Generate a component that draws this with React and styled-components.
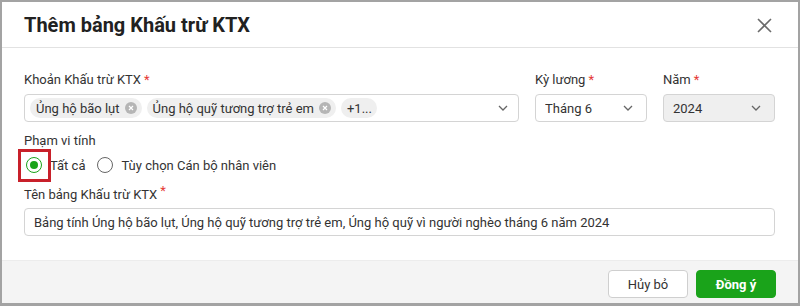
import React from "react";
import styled, { createGlobalStyle } from "styled-components";

const Global = createGlobalStyle`
  html, body { margin: 0; padding: 0; background: #a3a3a3; }
  body { font-family: Roboto, "Noto Sans", Arial, sans-serif; }
  * { box-sizing: border-box; }
`;

const Frame = styled.div`
  padding: 2px;
  width: 800px;
  height: 306px;
`;

const Dialog = styled.div`
  width: 796px;
  height: 301px;
  background: #fff;
  display: flex;
  flex-direction: column;
`;

const Header = styled.div`
  height: 46px;
  border-bottom: 1px solid #e2e2e2;
  display: flex;
  align-items: center;
  justify-content: space-between;
  padding: 0 26px 0 22px;
`;

const Title = styled.h1`
  margin: 0;
  font-size: 20px;
  font-weight: 700;
  color: #212121;
  letter-spacing: 0;
`;

const CloseBtn = styled.button`
  border: none;
  background: transparent;
  padding: 0;
  width: 16px;
  height: 16px;
  display: flex;
  align-items: center;
  justify-content: center;
  margin-top: 1px;
`;

const Body = styled.div`
  flex: 1;
  padding: 23px 23px 0 22px;
  display: flex;
  flex-direction: column;
`;

const TopRow = styled.div`
  display: grid;
  grid-template-columns: 1fr 112px 112px;
  column-gap: 16px;
`;

const Field = styled.div`
  display: flex;
  flex-direction: column;
  margin-top: ${(p) => p.$mt || 0}px;
`;

const Label = styled.div`
  font-size: 13px;
  line-height: 18px;
  color: #333;
  margin-bottom: ${(p) => p.$mb ?? 5}px;
`;

const Star = styled.span`
  color: #e53935;
  margin-left: 3px;
  position: relative;
  top: ${(p) => (p.$raised ? -4 : 0)}px;
`;

const Box = styled.div`
  height: 28px;
  border: 1px solid #d4d4d4;
  border-radius: 4px;
  background: ${(p) => (p.$disabled ? "#efefef" : "#fff")};
  display: flex;
  align-items: center;
  padding: 0 ${(p) => (p.$tags ? 10 : 13)}px 0 ${(p) => (p.$tags ? 5 : 9)}px;
  font-size: 13px;
  color: #333;
`;

const BoxContent = styled.div`
  flex: 1;
  display: flex;
  align-items: center;
  gap: 5px;
  overflow: hidden;
  white-space: nowrap;
`;

const Tag = styled.span`
  display: inline-flex;
  align-items: center;
  gap: 5px;
  height: 20px;
  padding: 0 5px 0 6px;
  background: #efefef;
  border-radius: 10px;
  font-size: 13px;
  color: #333;
`;

const TagClose = styled.span`
  width: 12px;
  height: 12px;
  border-radius: 50%;
  background: #b5b5b5;
  display: inline-flex;
  align-items: center;
  justify-content: center;
`;

const RadioRow = styled.div`
  display: flex;
  align-items: center;
  height: 22px;
  margin-top: 4px;
  gap: 10px;
`;

const RadioItem = styled.label`
  position: relative;
  display: inline-flex;
  align-items: center;
  gap: 8px;
  font-size: 13px;
  color: #333;
  margin-left: 2px;
`;

const RadioCircle = styled.span`
  width: 16px;
  height: 16px;
  border-radius: 50%;
  border: 1px solid ${(p) => (p.$checked ? "#1aa31a" : "#666")};
  display: inline-flex;
  align-items: center;
  justify-content: center;
  &::after {
    content: "";
    width: 8px;
    height: 8px;
    border-radius: 50%;
    background: ${(p) => (p.$checked ? "#1aa31a" : "transparent")};
  }
`;

const Highlight = styled.span`
  position: absolute;
  left: -8px;
  top: 50%;
  margin-top: -16px;
  width: 33px;
  height: 33px;
  border: 3px solid #c8202a;
  pointer-events: none;
`;

const Footer = styled.div`
  height: 43px;
  background: #f4f4f4;
  border-top: 1px solid #ececec;
  display: flex;
  justify-content: flex-end;
  align-items: flex-start;
  padding: 9px 22px 0 0;
  gap: 8px;
`;

const Button = styled.button`
  width: 80px;
  height: 28px;
  border-radius: 4px;
  font-family: Roboto, Arial, sans-serif;
  font-size: 13px;
  font-weight: ${(p) => (p.$primary ? 700 : 400)};
  color: ${(p) => (p.$primary ? "#fff" : "#333")};
  background: ${(p) => (p.$primary ? "#1aa31a" : "#fff")};
  border: 1px solid ${(p) => (p.$primary ? "#1aa31a" : "#cfcfcf")};
`;

const Chevron = () => (
  <svg width="10" height="6" viewBox="0 0 10 6">
    <polyline points="1,1 5,5 9,1" fill="none" stroke="#666" strokeWidth="1.3" />
  </svg>
);

const XIcon = () => (
  <svg width="6" height="6" viewBox="0 0 6 6">
    <path d="M1 1 L5 5 M5 1 L1 5" stroke="#fff" strokeWidth="1.2" />
  </svg>
);

export default function App() {
  return (
    <>
      <Global />
      <Frame>
        <Dialog>
          <Header>
            <Title>Thêm bảng Khấu trừ KTX</Title>
            <CloseBtn aria-label="close">
              <svg width="15" height="15" viewBox="0 0 15 15">
                <path d="M1 1 L14 14 M14 1 L1 14" stroke="#6b6b6b" strokeWidth="1.6" />
              </svg>
            </CloseBtn>
          </Header>
          <Body>
            <TopRow>
              <Field>
                <Label>
                  Khoản Khấu trừ KTX<Star>*</Star>
                </Label>
                <Box $tags>
                  <BoxContent>
                    <Tag>
                      Ủng hộ bão lụt
                      <TagClose>
                        <XIcon />
                      </TagClose>
                    </Tag>
                    <Tag>
                      Ủng hộ quỹ tương trợ trẻ em
                      <TagClose>
                        <XIcon />
                      </TagClose>
                    </Tag>
                    <Tag>+1...</Tag>
                  </BoxContent>
                  <Chevron />
                </Box>
              </Field>
              <Field>
                <Label>
                  Kỳ lương<Star>*</Star>
                </Label>
                <Box>
                  <BoxContent>Tháng 6</BoxContent>
                  <Chevron />
                </Box>
              </Field>
              <Field>
                <Label>
                  Năm<Star>*</Star>
                </Label>
                <Box $disabled>
                  <BoxContent>2024</BoxContent>
                  <Chevron />
                </Box>
              </Field>
            </TopRow>
            <Field $mt={10}>
              <Label $mb={0}>Phạm vi tính</Label>
              <RadioRow>
                <RadioItem>
                  <RadioCircle $checked />
                  Tất cả
                  <Highlight />
                </RadioItem>
                <RadioItem>
                  <RadioCircle />
                  Tùy chọn Cán bộ nhân viên
                </RadioItem>
              </RadioRow>
            </Field>
            <Field $mt={10}>
              <Label $mb={4}>
                Tên bảng Khấu trừ KTX<Star $raised>*</Star>
              </Label>
              <Box>
                <BoxContent>
                  Bảng tính Ủng hộ bão lụt, Ủng hộ quỹ tương trợ trẻ em, Ủng hộ quỹ vì người nghèo tháng 6 năm 2024
                </BoxContent>
              </Box>
            </Field>
          </Body>
          <Footer>
            <Button>Hủy bỏ</Button>
            <Button $primary>Đồng ý</Button>
          </Footer>
        </Dialog>
      </Frame>
    </>
  );
}
